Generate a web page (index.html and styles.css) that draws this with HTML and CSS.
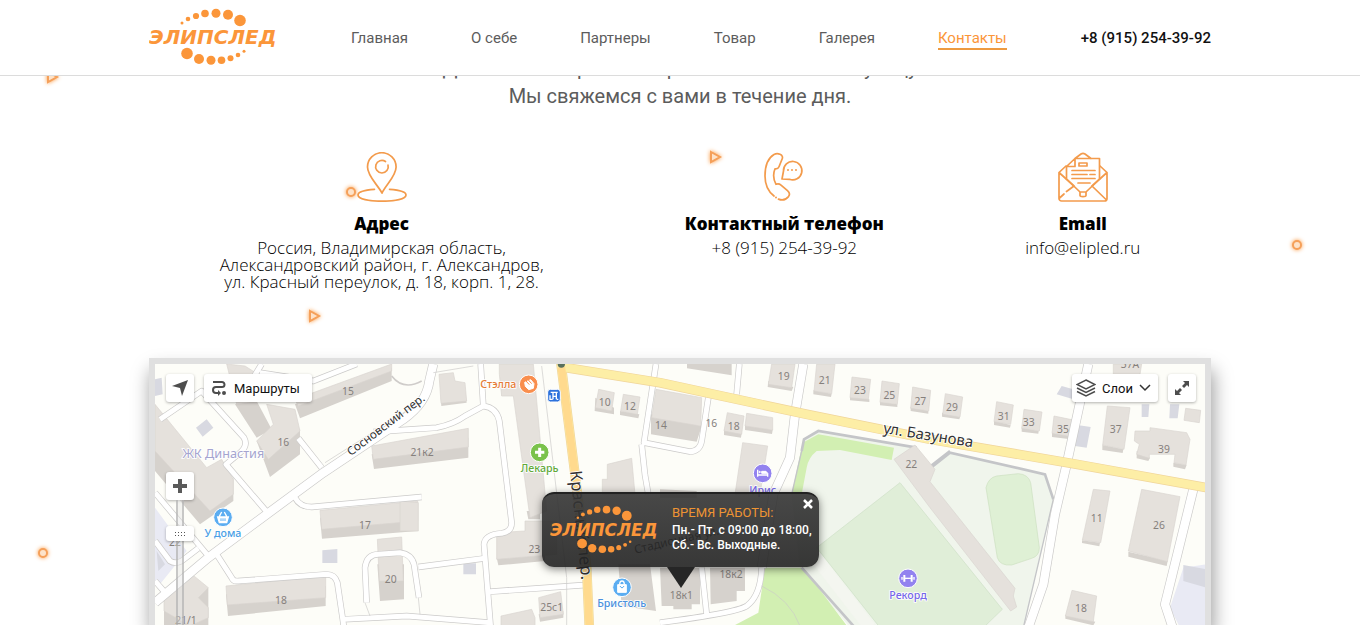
FILE: index.html
```html
<!DOCTYPE html>
<html lang="ru">
<head>
<meta charset="utf-8">
<title>Элипслед — Контакты</title>
<link rel="stylesheet" href="styles.css">
</head>
<body>
<header class="header">
  <div class="container header-row">
    <a href="#" class="logo" aria-label="Элипслед">
      <svg width="128" height="60" viewBox="0 0 128 60">
        <g id="logo" fill="#fb963a">
          <circle cx="33" cy="15" r="1.5"/><circle cx="39" cy="11" r="2.3"/><circle cx="47" cy="8" r="3.1"/><circle cx="56" cy="5.5" r="3.8"/><circle cx="67" cy="5.3" r="4.5"/><circle cx="79" cy="6.7" r="5"/><circle cx="91" cy="12.5" r="5.8"/>
          <circle cx="38" cy="45.5" r="5.8"/><circle cx="50" cy="51" r="5"/><circle cx="62" cy="52.3" r="4.5"/><circle cx="72.5" cy="52.3" r="3.8"/><circle cx="81.5" cy="50.3" r="3"/><circle cx="89" cy="47" r="2.3"/><circle cx="95" cy="43.3" r="1.5"/>
          <text x="0" y="36" class="logo-text">ЭЛИПСЛЕД</text>
        </g>
      </svg>
    </a>
    <nav class="nav">
      <a href="#">Главная</a>
      <a href="#">О себе</a>
      <a href="#">Партнеры</a>
      <a href="#">Товар</a>
      <a href="#">Галерея</a>
      <a href="#" class="active">Контакты</a>
    </nav>
    <a href="tel:+89152543992" class="phone">+8 (915) 254-39-92</a>
  </div>
</header>

<main class="container main">
  <p class="lead">Для связи отправьте через сайт ваше имя и улицу<br>Мы свяжемся с вами в течение дня.</p>

  <section class="contacts">
    <div class="contact">
      <svg class="icon" viewBox="0 0 50 50">
        <path d="M25 41C20 32 10.500 24 10.500 15a14.300 14.300 0 0 1 28.600 0C39.100 24 29.500 32 25 41z"/>
        <path d="M28.500 9.500A6.300 6.300 0 1 0 31 13"/>
        <path d="M17.500 37.300C7 38 1 40 1 43c0 4 11 6.200 24 6.200S49 47 49 43c0-3-6-5-16.500-5.700"/>
      </svg>
      <h3>Адрес</h3>
      <p>Россия, Владимирская область,<br>Александровский район, г. Александров,<br>ул. Красный переулок, д. 18, корп. 1, 28.</p>
    </div>
    <div class="contact">
      <svg class="icon" viewBox="0 0 50 50">
        <path d="M15 44C8.500 39 6 32 6 24 6 14 9 6 15 2.500c2-1 4-1 6-.2 2.500 1 3 3 2 5l-3 7.500c-.7 1.700-2 2.200-4 2-2 5-1.500 11 1 15.500 2-.8 3.500-.5 5 .8l6.500 5.500c2.500 2.200 2.500 4 1 6-2.500 3-6.500 4-10 2.500"/>
        <path d="M23 27l1.500-8a9.200 9.200 0 1 1 6 8.300z"/>
        <path class="dots" d="M29 18v.1M33 18v.1M37 18v.1M17 45.500v.1"/>
      </svg>
      <h3>Контактный телефон</h3>
      <p>+8 (915) 254-39-92</p>
    </div>
    <div class="contact">
      <svg class="icon" viewBox="0 0 50 50">
        <path d="M1 46.500v-26L8 14M49 20.500L42 14M49 20.500V46.500a2.500 2.500 0 0 1-2.500 2.500H3.500A2.500 2.500 0 0 1 1 46.500L6 42M8.500 39.500L16 34 1 20.500M49 20.500L34 34 48.500 48"/>
        <path d="M8.500 27V14.500L17 6.500H41.500V27M8.500 14.500H17V6.500l6-4.500c1.500-1 2.500-1 4 0l6 4.500M8.500 27L22 40h6L41.500 27M22 40v3.500c0 1.500 6 1.500 6 0V40"/>
        <path d="M21 11h8v3h-8zM14 18.500H37M14 22.500h15M32 22.500h5M14 26.500H37M20 31h12"/>
      </svg>
      <h3>Email</h3>
      <p>info@elipled.ru</p>
    </div>
  </section>

  <section class="map">
    <svg class="map-canvas" viewBox="45 39 3150 800" preserveAspectRatio="xMidYMin slice">
      <defs>
        <g id="wide-roads">
          <path d="M45 755L205 620 380 490 550 365 790 205Q860 155 868 90L880 39"/>
          <path d="M2845 39L2780 340 2745 490 2710 700 2665 830M3160 415L3075 760 3098 830M1990 39L1965 190 1950 320 1900 430 1865 650"/>
        </g>
        <g id="slim-roads">
          <path d="M340 80L365 39M60 205L185 120 312 260Q325 285 300 305L258 340 380 482M545 350L475 262M360 65L520 90 650 39"/>
          <path d="M465 440Q480 468 515 468L845 438M230 610L275 680Q280 692 295 690L560 670Q585 670 592 695L612 830M612 805L800 795 1050 815"/>
          <path d="M45 425L205 615M45 570L90 630Q105 640 125 630L175 592M45 690L80 730"/>
          <path d="M680 755L675 650Q680 610 715 610L780 605Q815 610 822 640L837 740M835 648L1035 622"/>
          <path d="M700 243L890 230Q940 220 975 195L1030 165 1022 39M1030 165Q1070 170 1078 210L1115 515Q1115 542 1085 547 1035 550 1032 580L1052 830M1050 722L1335 702"/>
          <path d="M1548 39L1512 275 1650 302Q1680 300 1685 270L1705 140M1798 39L1790 130M1505 280L1515 372 1525 430M1865 650Q1862 735 1820 765 1790 785 1560 815M1685 650L1700 790"/>
        </g>
        <g id="yellow-roads">
          <path d="M1262 30L1305 370 1340 650 1348 830"/>
          <path d="M1265 48L1560 95 2000 190 2370 265 2800 338 3200 410"/>
        </g>
      </defs>
      <rect x="45" y="39" width="3150" height="800" fill="#fdfdf8"/>
      <!-- yards and parks -->
      <path fill="#e9eaf4" d="M45 470L140 600 60 700 45 690zM3090 770L3130 650 3200 640V830H3120z"/>
      <path fill="#f0f5ec" d="M1955 440L1990 265 2035 240 2330 290 2370 350 2430 305 2715 370 2740 445 2650 830H2130L1980 650z"/>
      <path fill="#d2efb2" d="M1955 430L1988 275 2035 250 2262 290 2255 327 2100 297 2030 300Q2005 320 2000 350L1985 430zM1875 650H1990L2125 830H1770L1855 785z"/>
      <path fill="#e0eed8" d="M2280 395L2587 775 2530 830H2220L2030 590z" stroke="#cddfc6" stroke-width="2"/>
      <path fill="#dff0d5" stroke="#cbe0c0" stroke-width="2" d="M2538 410Q2545 380 2570 375L2635 368Q2665 370 2672 395L2698 590Q2698 615 2675 622L2615 642Q2580 645 2572 620z"/>
      <path class="fence" d="M1985 300L1992 265 2035 240 2330 290M2370 352L2430 305 2715 370 2740 445M2430 300L2360 355M1985 650L2145 830"/>
      <path class="fence thin-fence" d="M2740 445L2650 830M1985 300L1955 430"/>
      <path fill="none" stroke="#f4f6f0" stroke-width="36" d="M2035 630L2190 830"/>
      <!-- houses: shaded side first, roof above it -->
      <g fill="#d6d2cd">
        <path d="M285 160L350 150 395 235 350 260zM350 270L480 235V310L390 378zM465 160L755 50V90L480 202zM695 310L985 260V320L702 354zM540 500L833 485V540L546 563zM258 730L557 705V765L264 795zM712 640H792V745L720 750zM45 290L190 430 280 380V450L180 520 45 360zM72 735L205 710V830H72z"/>
        <path d="M902 140H978L980 155 904 165zM1085 90H1120V135H1085zM1160 480H1200V505H1165zM1070 620L1215 595V630L1075 643zM1366 140L1422 170V190L1364 180zM1440 180L1498 190 1495 202 1440 192zM1533 190L1685 225 1670 272 1533 250zM1196 790L1270 780V800L1200 812zM1641 39H1775V73L1641 52zM1885 90L1960 108 1955 120 1883 108zM1752 235L1805 245 1803 260 1752 252zM1815 220L1898 237 1896 249 1815 237zM2020 118L2075 128 2073 138 2020 130zM2130 138L2188 145V153L2130 148zM2220 152L2272 160V168L2220 163zM2312 168L2365 180V188L2312 180zM2406 185L2460 198 2458 205 2406 197zM2562 210L2612 222 2610 230 2562 222zM2645 230L2696 240 2695 248 2645 242zM2736 245L2792 255V265L2736 258zM2887 282L2950 295 2948 306 2887 297zM2990 300L3030 320 3025 330 2990 322zM3100 335L3140 342 3135 355 3100 347zM2826 568L2880 575 2878 586 2826 576zM2965 602L3083 630 3080 645 2965 617zM2776 793L2866 812 2860 823 2776 803z"/>
        <path d="M1435 640H1530L1548 780 1445 765zM1560 650H1680V760H1655V775H1600V765H1565zM1710 650H1815V720H1790V750L1712 760zM1560 415L1670 420V440H1560z"/>
      </g>
      <g fill="#e5e1dc" stroke="#d9d5d0" stroke-width="2">
        <path d="M260 39L315 45 370 80 350 150 290 160zM350 270L400 220 380 160 465 175 480 240 385 325zM465 145L755 39V60L475 165zM695 285L985 232V288L700 325zM540 478L833 450V510L545 535zM258 705L557 675V740L262 762zM712 565L785 558 790 690H718zM45 160L200 350 245 325 280 385V430L210 480 45 300zM72 735L150 665 205 710 175 740 205 770V800L150 825 72 780z"/>
        <path d="M897 70L940 65 945 90 975 95 980 150 903 157zM1078 70L1078 39H1180L1220 480 1170 500 1120 135H1085zM1070 545L1155 540V510H1250V610L1070 625zM780 450L835 455V540H780zM1376 115L1423 125 1415 180 1366 170zM1450 130L1500 138 1492 190 1442 180zM1548 115L1685 140 1682 225 1535 200zM1196 740L1262 722 1270 790 1200 800zM1083 795L1175 775 1185 800V830H1083zM1402 340L1475 322 1485 430H1387V385H1402zM1808 275L1883 285 1860 430H1785z"/>
        <path d="M1895 39H1965L1955 110 1885 100zM1762 185L1812 195 1805 250 1752 240zM1820 187L1898 200V237L1815 225zM2030 39H2085L2075 128 2022 120zM2136 78L2192 85 2185 145 2130 140zM2226 90L2278 98 2272 160 2220 154zM2318 108L2372 118 2366 180 2312 172zM2416 128L2468 138 2460 198 2408 190zM2570 152L2620 162 2612 220 2562 212zM2652 175L2706 183 2698 240 2645 232zM2742 195L2805 208 2795 257 2736 247zM2902 165L2970 170 2952 295 2888 282zM2985 240L3030 240 3030 230 3140 245 3150 265 3138 342 3102 335 3105 310H3028V322L2990 310 2998 280 2983 270zM2920 39H3005L3000 70H2920zM3137 172L3182 178 3178 215 3132 208zM2860 415L2910 420 2882 575 2827 567zM3005 415L3120 437 3082 632 2965 600zM2796 718L2870 735 2860 812 2776 795z"/>
        <path d="M2262 325L2325 282 2385 355 2370 392 2625 712 2620 735 2630 768 2612 780 2370 470z"/>
      </g>
      <g fill="#d8d9e1"><path d="M168 230L200 205 220 230 188 257zM547 598L592 594V636H547zM45 85L65 80 68 130 45 135zM970 637H1008V670H970zM2750 130L2765 105 2800 115V145zM2812 222L2852 228 2840 290 2805 285zM3005 160H3028L3025 198H3005zM3090 160H3118L3113 202H3088zM3130 642L3200 655V710L3130 690zM50 600L75 640 55 660z"/></g>
      <use href="#slim-roads" class="road casing slim"/><use href="#wide-roads" class="road casing wide"/>
      <use href="#slim-roads" class="road fill-slim"/><use href="#wide-roads" class="road fill-wide"/>
      <use href="#yellow-roads" class="road yellow-edge"/><use href="#yellow-roads" class="road yellow"/>
      <path stroke="#ffda8e" stroke-width="23" d="M1264 48L1305 370 1340 650 1348 830" fill="none"/>
      <circle cx="1264" cy="39" r="11" fill="#59705c"/>
      <path class="thin" d="M1205 45L1280 680V825M880 65L1000 45M555 335L830 160M1865 705Q1950 745 1980 825M835 740L840 790M675 755L690 795"/>
      <path d="M845 90Q790 120 755 75" fill="none" stroke="#cfccca" stroke-width="5"/>

      <g class="house-no">
        <text x="624" y="132">15</text><text x="430" y="284">16</text><text x="675" y="535">17</text><text x="752" y="696">20</text><text x="423" y="758">18</text><text x="138" y="820">21/1</text><text x="105" y="586">22</text><text x="846" y="315">21к2</text>
        <text x="1394" y="164">10</text><text x="1470" y="176">12</text><text x="1563" y="235">14</text><text x="1714" y="229">16</text><text x="1781" y="237">18</text><text x="1183" y="605">23</text><text x="1235" y="780">25с1</text><text x="1624" y="745">18к1</text><text x="1773" y="681">18к2</text>
        <text x="1931" y="87">19</text><text x="2054" y="99">21</text><text x="2160" y="129">23</text><text x="2248" y="144">25</text><text x="2341" y="163">27</text><text x="2436" y="179">29</text><text x="2591" y="206">31</text><text x="2666" y="224">33</text><text x="2769" y="245">35</text><text x="2927" y="247">37</text><text x="2970" y="52">37А</text><text x="3072" y="305">39</text><text x="2314" y="351">22</text><text x="2870" y="512">11</text><text x="3057" y="535">26</text><text x="2823" y="783">18</text>
      </g>
      <g class="street">
        <text transform="translate(632 316) rotate(-37)" font-size="35">Сосновский пер.</text>
        <text transform="translate(2228 246) rotate(9)" font-size="45">ул. Базунова</text>
        <text transform="translate(1290 361) rotate(84)" font-size="50">Красный пер.</text>
        <text transform="translate(1486 608) rotate(-13)" font-size="35">Стадионная ул.</text>
      </g>
      <g class="place">
        <text x="250" y="322" font-size="38" fill="#a5a4cf" class="estate">ЖК Династия</text>
        <text x="249" y="558" fill="#4b9fe5">У дома</text><text x="1445" y="768" fill="#4b91dd">Бристоль</text><text x="1075" y="112" fill="#e57b35">Стэлла</text><text x="1199" y="364" fill="#62a93a">Лекарь</text><text x="1868" y="428" fill="#7667e8">Ирис</text><text x="2304" y="743" fill="#7667e8">Рекорд</text>
      </g>
      <g stroke="#fff" stroke-width="3" fill="#fff">
        <circle cx="249" cy="499" r="28" fill="#5badf1"/><path d="M233 498h32l-5 17h-22zM238 496l7-13M260 496l-7-13" stroke-width="4"/><path d="M243 502v8M249 502v8M255 502v8" stroke="#5badf1"/>
        <circle cx="1446" cy="709" r="28" fill="#5badf1"/><path d="M1433 701h26v23h-26z"/><path d="M1439 701q0-11 7-11t7 11" fill="none" stroke-width="4"/><path d="M1440 705q6 11 12 0" fill="none" stroke="#5badf1"/>
        <circle cx="1166" cy="100" r="28" fill="#f98e4d"/><path d="M1154 94l18-8 10 12-2 14-14 4-10-10z"/><path d="M1158 90l10 11M1165 87l10 11" stroke="#f98e4d"/>
        <circle cx="1199" cy="304" r="28" fill="#7ac24b"/><path d="M1199 290v28M1185 304h28" stroke-width="9"/>
        <circle cx="1868" cy="367" r="28" fill="#9282ef"/><path d="M1853 356v21M1854 372h29M1883 377v-10" stroke-width="4"/><path d="M1865 361h13l5 6h-18z"/><circle cx="1859" cy="363" r="2"/>
        <circle cx="2304" cy="682" r="28" fill="#9282ef"/><path d="M2291 682h26" stroke-width="4"/><path d="M2293 672v20M2315 672v20" stroke-width="6"/><path d="M2286 678v8M2322 678v8" stroke-width="4"/>
        <rect x="1223" y="115" width="38" height="38" rx="8" fill="#2d72dc"/><path d="M1232 124h21M1239 124v21M1249 124v21M1239 136h10M1230 133v12h8M1250 145h5" stroke-width="4" fill="none"/>
      </g>
    </svg>

    <div class="toolbar">
      <button class="tool square" aria-label="Моё местоположение"><svg width="18" height="18" viewBox="0 0 18 18"><path d="M1 7L17 1 11 17 9 9z" fill="#4d4d4d"/></svg></button>
      <button class="tool routes"><svg width="16" height="16" viewBox="0 0 16 16" fill="none" stroke="#4d4d4d" stroke-width="2"><path d="M2 2h9a2.500 2.500 0 0 1 0 5H5a3 3 0 0 0 0 6h3"/><path d="M7 10l3 3-3 3" fill="#4d4d4d" stroke="none"/><circle cx="13" cy="13" r="1"/></svg>Маршруты</button>
      <button class="tool layers"><svg width="20" height="18" viewBox="0 0 20 18" fill="none" stroke="#4d4d4d" stroke-width="1.500"><path d="M10 1l9 4.500-9 4.500-9-4.500zM1 9l9 4.500L19 9M1 12.500L10 17l9-4.500"/></svg>Слои<svg width="12" height="8" viewBox="0 0 12 8" fill="none" stroke="#333" stroke-width="1.500"><path d="M1 1l5 5 5-5"/></svg></button>
      <button class="tool square" aria-label="На весь экран"><svg width="16" height="16" viewBox="0 0 16 16" fill="#4d4d4d"><path d="M9 1h6v6l-2-2-3 3-2-2 3-3zM1 9v6h6l-2-2 3-3-2-2-3 3z"/></svg></button>
    </div>
    <div class="zoom">
      <button class="tool square" aria-label="Приблизить"><svg width="14" height="14" viewBox="0 0 14 14"><path d="M7 0v14M0 7h14" stroke="#5a5a5a" stroke-width="4"/></svg></button>
      <div class="track"><button class="thumb" aria-label="Масштаб"><svg width="12" height="6" viewBox="0 0 12 6" fill="#555"><path d="M1 1h1v1H1zM4 1h1v1H4zM7 1h1v1H7zM10 1h1v1h-1zM1 4h1v1H1zM4 4h1v1H4zM7 4h1v1H7zM10 4h1v1h-1z"/></svg></button></div>
    </div>

    <div class="balloon">
      <svg width="108" height="51" viewBox="0 0 128 60"><use href="#logo"/></svg>
      <div class="hours"><h4>ВРЕМЯ РАБОТЫ:</h4><p>Пн.- Пт. с 09:00 до 18:00,<br>Сб.- Вс. Выходные.</p></div>
      <button class="close" aria-label="Закрыть"><svg width="10" height="10" viewBox="0 0 10 10"><path d="M1 1l8 8M9 1L1 9" stroke="#fff" stroke-width="2.500"/></svg></button>
    </div>
  </section>
</main>

<svg class="particles" aria-hidden="true">
  <defs>
    <circle id="ring" r="4"/>
    <path id="tri" d="M-4-5L5 0-4 5z"/>
  </defs>
  <g class="glow"><use href="#ring" x="351" y="192"/><use href="#ring" x="1297" y="245"/><use href="#ring" x="43" y="553"/><use href="#tri" x="715" y="157"/><use href="#tri" x="314" y="316"/><use href="#tri" x="52" y="77"/></g>
</svg>
</body>
</html>
```
FILE: styles.css
```css
* { box-sizing: border-box; }
body {
  margin: 0;
  height: 100vh;
  overflow: hidden;
  display: flex;
  flex-direction: column;
  background: #fff;
  color: #000;
  font-family: Roboto, sans-serif;
}
h3, h4, p { margin: 0; }
a { color: inherit; text-decoration: none; }
button { border: 0; padding: 0; font: inherit; cursor: pointer; }
.container { width: 100%; max-width: 1062px; margin: 0 auto; }

.header {
  position: relative;
  z-index: 3;
  flex: none;
  background: #fff;
  border-bottom: 1px solid #dcdcdc;
}
.header-row { display: flex; align-items: center; justify-content: space-between; height: 75px; }
.logo svg { display: block; }
.logo-text { font: italic bold 20px "DejaVu Sans", sans-serif; }
.nav { display: flex; gap: 63px; font-size: 15px; line-height: 20px; color: #5c5c5c; }
.nav a { padding-top: 2px; border-bottom: 2px solid transparent; }
.nav .active { color: #fb963a; border-color: #ee9a40; }
.phone { font-size: 15px; font-weight: 500; color: #111; }

.main { flex: 1; min-height: 0; display: flex; flex-direction: column; }
.lead {
  margin-top: -22px;
  text-align: center;
  font-size: 20px;
  line-height: 28px;
  color: #5c5c5c;
}
.contacts { display: flex; justify-content: space-around; padding: 42px 0 68px; }
.contact { text-align: center; font-family: "Open Sans", sans-serif; font-size: 17px; line-height: 17px; }
.contact h3 { margin: 10px 0 3px; font-size: 17px; line-height: 24px; font-weight: 800; }
.contact p { font-weight: 300; }
.icon { display: block; width: 50px; height: 50px; margin: 0 auto; fill: none; stroke: #f39b4c; stroke-width: 1.7; stroke-linecap: round; stroke-linejoin: round; }
.icon .dots { stroke-width: 2; }

.map {
  position: relative;
  flex: 1;
  min-height: 0;
  border: 6px solid #e0e0e0;
  border-bottom: 0;
  box-shadow: 2px 12px 18px rgba(0, 0, 0, 0.4);
  overflow: hidden;
}
.map-canvas { display: block; width: 100%; height: 100%; }
.road { fill: none; stroke-linejoin: round; }
.casing { stroke: #cbcac9; }
.slim { stroke-width: 19px; }
.wide { stroke-width: 29px; }
.fill-slim { stroke: #fff; stroke-width: 15px; }
.fill-wide { stroke: #fff; stroke-width: 25px; }
.yellow-edge { stroke: #f0d59a; stroke-width: 29px; }
.yellow { stroke: #fdeea6; stroke-width: 25px; }
.fence { fill: none; stroke: #c4c5c8; stroke-width: 8px; }
.thin-fence { stroke-width: 4px; }
.thin { fill: none; stroke: #cbcac9; stroke-width: 2px; }
.house-no { font: 31px "Noto Sans", sans-serif; fill: #85807c; text-anchor: middle; }
.street { font-family: "Noto Sans", sans-serif; fill: #333; stroke: #fff; stroke-width: 5px; paint-order: stroke; }
.place { font: 500 32px "Noto Sans", sans-serif; text-anchor: middle; stroke: #fff; stroke-width: 5px; paint-order: stroke; }
.estate { font-weight: 400; }

.toolbar { position: absolute; top: 10px; left: 11px; right: 9px; display: flex; gap: 10px; }
.tool {
  display: flex;
  align-items: center;
  justify-content: center;
  height: 28px;
  background: #fff;
  border-radius: 3px;
  box-shadow: 0 1px 3px rgba(0, 0, 0, 0.3);
  font-size: 13px;
  color: #111;
}
.square { width: 28px; }
.routes { padding: 0 12px 0 7px; gap: 7px; }
.layers { margin-left: auto; padding: 0 7px 0 4px; gap: 6px; }
.zoom { position: absolute; top: 108px; left: 11px; bottom: 0; display: flex; flex-direction: column; }
.track { flex: 1; width: 8px; margin: 0 auto; background: rgba(225, 225, 225, 0.4); border: solid rgba(170, 170, 170, 0.6); border-width: 0 2px; display: flex; justify-content: center; align-items: flex-start; }
.thumb { flex: none; width: 28px; height: 15px; margin-top: 26px; display: flex; align-items: center; justify-content: center; background: #fff; border-radius: 3px; box-shadow: 0 1px 3px rgba(0, 0, 0, 0.3); }

.balloon {
  position: absolute;
  top: 128px;
  left: calc(50% - 138px);
  width: 277px;
  height: 75px;
  display: flex;
  gap: 14px;
  padding: 11px 6px 0 8px;
  border-radius: 12px;
  border-top: 2px solid #222;
  background: linear-gradient(rgba(52, 52, 52, 0.9), rgba(34, 34, 34, 0.9));
  box-shadow: 0 2px 8px rgba(0, 0, 0, 0.5);
}
.balloon::after {
  content: "";
  position: absolute;
  top: 100%;
  left: 50%;
  margin-left: -14px;
  border: 14px solid transparent;
  border-top: 21px solid #262626;
  border-bottom: 0;
}
.balloon > svg { flex: none; }
.hours { color: #fff; white-space: nowrap; }
.hours h4 { font-size: 13px; line-height: 15px; font-weight: 400; color: #ee9433; margin-bottom: 3px; }
.hours p { font-size: 12px; line-height: 15px; font-weight: 500; }
.close { position: absolute; top: 5px; right: 6px; background: none; line-height: 0; }

.particles { position: fixed; inset: 0; z-index: 2; width: 100%; height: 100%; pointer-events: none; }
.glow { fill: #fde3ca; stroke: #f5a05a; stroke-width: 2px; filter: drop-shadow(0 0 2px #fb963a); }
```
